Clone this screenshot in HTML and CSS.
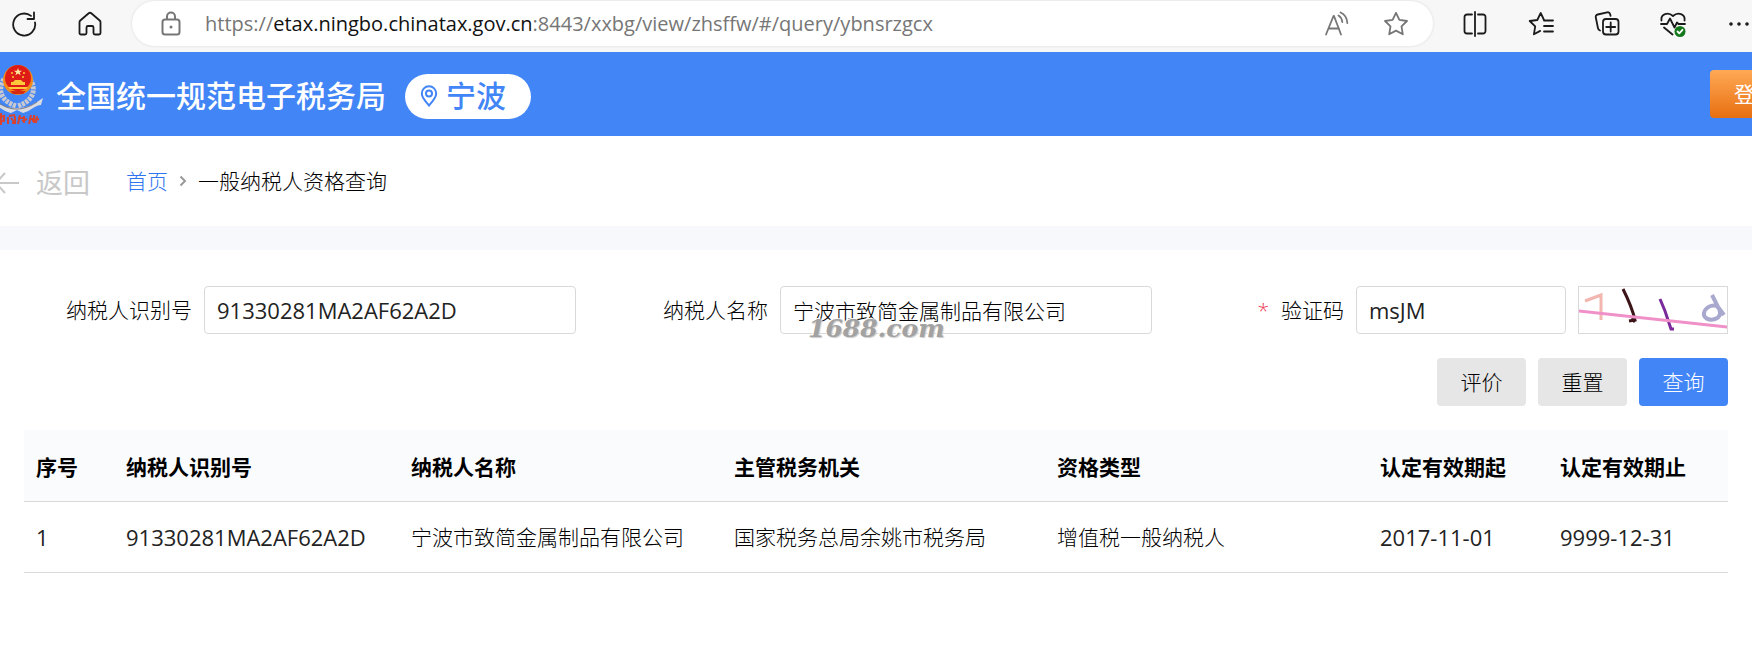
FILE: index.html
```html
<!DOCTYPE html>
<html lang="zh-CN">
<head>
    <meta charset="UTF-8">
    <meta name="viewport" content="width=device-width, initial-scale=1.0">
    <title>一般纳税人资格查询</title>
    <link rel="stylesheet" href="styles.css">
</head>
<body>
    <div class="toolbar">
        <button type="button" class="tool reload" aria-label="刷新">
            <svg width="26" height="26" viewBox="0 0 26 26"><path d="M24 11.500A11 11 0 1 1 20 4.900M23 1.500V8h-6.500"/></svg>
        </button>
        <button type="button" class="tool home" aria-label="主页">
            <svg width="26" height="26" viewBox="0 0 26 26"><path d="M2.500 11.200c0-.7.3-1.200.8-1.700L11.700 2.300a2 2 0 0 1 2.600 0L22.700 9.500c.5.5.8 1 .8 1.700V22a1.500 1.500 0 0 1-1.500 1.500h-4a1.500 1.500 0 0 1-1.500-1.500v-5.500a1.500 1.500 0 0 0-1.500-1.500h-4a1.500 1.500 0 0 0-1.500 1.500V22A1.500 1.500 0 0 1 8 23.500H4A1.500 1.500 0 0 1 2.500 22z"/></svg>
        </button>
        <div class="address">
            <svg class="lock" width="22" height="26" viewBox="0 0 22 26"><rect x="2.500" y="8.500" width="17" height="15" rx="2.500"/><path d="M7 8.500V5.500a4 4 0 0 1 8 0v3"/><circle class="dot" cx="11" cy="16" r="1.500"/></svg>
            <div class="url">https://<span>etax.ningbo.chinatax.gov.cn</span>:8443/xxbg/view/zhsffw/#/query/ybnsrzgcx</div>
            <button type="button" class="tool soft" aria-label="大声朗读">
                <svg width="26" height="26" viewBox="0 0 26 26"><path d="M2 23.500 9.500 5h.5L17 23.500M4.500 17.500h10.500M14.500 4.500c2 1.200 3.500 3.500 3.800 6.500M16.500 1.500c4 1.700 6.500 5.500 6.800 10.500"/></svg>
            </button>
            <button type="button" class="tool soft" aria-label="收藏">
                <svg width="26" height="26" viewBox="0 0 26 26"><path d="m13 1.800 3.400 7 7.600 1.200-5.500 5.400 1.300 7.900-6.800-3.700-6.800 3.700 1.300-7.900L2 10l7.600-1.200z"/></svg>
            </button>
        </div>
        <div class="tools">
            <button type="button" class="tool" aria-label="分屏">
                <svg width="26" height="26" viewBox="0 0 26 26"><path d="M10 3.500H5A2.500 2.500 0 0 0 2.500 6v14A2.500 2.500 0 0 0 5 22.500h5M13 1v24M16 3.500h5A2.500 2.500 0 0 1 23.500 6v14a2.500 2.500 0 0 1-2.500 2.500h-5"/></svg>
            </button>
            <button type="button" class="tool" aria-label="收藏夹">
                <svg width="26" height="26" viewBox="0 0 26 26"><path d="M17.500 9.500 16 9l-3.300-7L9.300 9 1.700 10l5.500 5.400-1.300 7.900 6.300-3.400M16 9.500h9M16 15h9M16 20.500h9"/></svg>
            </button>
            <button type="button" class="tool" aria-label="集锦">
                <svg width="26" height="26" viewBox="0 0 26 26"><rect x="9" y="8" width="15.500" height="15.500" rx="3"/><path d="M16.700 11.500v9M12.200 16h9M6 19.500c-1.200-.4-1.800-1.200-2-2.200L1.800 6.500A2.500 2.500 0 0 1 3.700 3.500l9.500-2.200c1.500-.3 2.600.6 3 2l.3 1.500"/></svg>
            </button>
            <button type="button" class="tool" aria-label="浏览器概要">
                <svg width="26" height="26" viewBox="0 0 26 26"><path d="M1.500 9.500C.5 3 8 .5 13 5c5-4.500 12.500-2 11.500 4.500M1 13h6l3-5.500 4.500 9 2.500-5 1.500 1.500H25M4 16.500l8.500 7"/><circle class="badge" cx="20" cy="20.500" r="5.500"/><path class="tick" d="m17.500 20.500 1.800 1.800 3.200-3.500"/></svg>
            </button>
            <button type="button" class="tool" aria-label="更多">
                <svg width="26" height="26" viewBox="0 0 26 26"><circle class="dot" cx="5" cy="13" r="1.800"/><circle class="dot" cx="13" cy="13" r="1.800"/><circle class="dot" cx="21" cy="13" r="1.800"/></svg>
            </button>
        </div>
    </div>

    <header class="header">
        <!-- 税徽 -->
        <svg class="logo" width="44" height="64" viewBox="0 0 44 64">
            <g fill="none" stroke="#c9c9cf" stroke-width="5" stroke-dasharray="3 1"><path d="M4 16c-7 11-3 22 12 27M30 16c7 11 3 22-12 27"/></g>
            <path d="M-6 36c4 6 12 9 23 9s19-5 26-10l-2 7c-6 0-10 6-18 8l-6-3-6 3c-8-2-11-7-18-8z" fill="#d9dbe0"/>
            <path d="M-2 39c6 5 12 7 19 7s14-3 20-7" fill="none" stroke="#777b86" stroke-width="1"/>
            <circle cx="18" cy="17" r="15" fill="#f08a1c"/>
            <circle cx="18" cy="15" r="13" fill="#df1b18"/>
            <path d="m18 5 1 2.700h3l-2.300 1.800.9 2.700-2.600-1.700-2.600 1.700.9-2.700L14 7.700h3z" fill="#ffe9a0"/>
            <g fill="#ffc83a"><circle cx="12" cy="10" r="1"/><circle cx="24" cy="10" r="1"/><circle cx="13" cy="14" r="1"/><circle cx="23" cy="14" r="1"/><path d="M13 19l2-2h6l2 2h2v3H11v-3zM8 24h20l-2 2H10z"/></g>
            <path d="M10 28h16l-3 3H13z" fill="#d72a13"/>
            <g fill="none" stroke="#d8432f" stroke-width="2"><path d="M-2 54l6-1v5l-6 1M1 50v12M9 53l6-1M8 54v7M11 55l3 4M15 53v8M12 60h3M20 52l-2 9M18 55h5M24 53v7M22 58l5-2M31 52l-2 9M29 56h4M34 52v8M32 58l7-2M37 53l-1 7"/></g>
        </svg>
        <h1>全国统一规范电子税务局</h1>
        <div class="city">
            <svg width="18" height="22" viewBox="0 0 18 22"><path d="M9 20.500C5 16 1.800 12.500 1.800 8.500a7.200 7.200 0 0 1 14.400 0C16.200 12.500 13 16 9 20.500z"/><circle cx="9" cy="8.500" r="3"/></svg>
            <span>宁波</span>
        </div>
        <button type="button" class="login">登录</button>
    </header>

    <nav class="crumbs">
        <a class="back" href="#">
            <svg width="30" height="24" viewBox="0 0 30 24"><path d="M29 12H6M15 2 6 12l9 10"/></svg>
            返回
        </a>
        <a class="crumb-home" href="#">首页</a>
        <svg class="sep" width="8" height="12" viewBox="0 0 8 12"><path d="m1.500 1.500 4.500 4.500-4.500 4.500"/></svg>
        <span>一般纳税人资格查询</span>
    </nav>

    <main class="content">
        <form>
            <div class="fields">
                <div class="field">
                    <label for="taxpayer-id">纳税人识别号</label>
                    <input type="text" id="taxpayer-id" class="latin" value="91330281MA2AF62A2D">
                </div>
                <div class="field">
                    <label for="taxpayer-name">纳税人名称</label>
                    <input type="text" id="taxpayer-name" value="宁波市致简金属制品有限公司">
                    <span class="watermark">1688.com</span>
                </div>
                <div class="field">
                    <label for="captcha"><span class="required">*</span>验证码</label>
                    <input type="text" id="captcha" class="latin" value="msJM">
                    <svg class="captcha" width="150" height="48" viewBox="1 1 148 46">
                        <path d="M7 15l16-6v25" stroke="#f2b5b0" stroke-width="3"/>
                        <path d="M45 3c5 10 9 18 12 31l-6 1M54 32l3 4" stroke="#3c1518" stroke-width="3"/>
                        <path d="M82 13l5 12 6 18h3" stroke="#7b2a9c" stroke-width="3"/>
                        <path d="M134 9l6 12 6 8M139 20c-6-2-12 2-13 7s5 8 11 6 7-8 2-13" stroke="#a9a9cf" stroke-width="4"/>
                        <path d="M0 25l150 16" stroke="#f090c8" stroke-width="3"/>
                    </svg>
                </div>
            </div>
            <div class="btn-group">
                <button type="button">评价</button>
                <button type="reset">重置</button>
                <button type="submit" class="primary">查询</button>
            </div>
        </form>

        <table>
            <thead>
                <tr>
                    <th class="col-index">序号</th>
                    <th class="col-id">纳税人识别号</th>
                    <th>纳税人名称</th>
                    <th>主管税务机关</th>
                    <th>资格类型</th>
                    <th class="col-date">认定有效期起</th>
                    <th class="col-date">认定有效期止</th>
                </tr>
            </thead>
            <tbody>
                <tr>
                    <td class="latin">1</td>
                    <td class="latin">91330281MA2AF62A2D</td>
                    <td>宁波市致简金属制品有限公司</td>
                    <td>国家税务总局余姚市税务局</td>
                    <td>增值税一般纳税人</td>
                    <td class="latin">2017-11-01</td>
                    <td class="latin">9999-12-31</td>
                </tr>
            </tbody>
        </table>
    </main>
</body>
</html>
```
FILE: styles.css
```css
* {
    box-sizing: border-box;
}

body {
    margin: 0;
    font-family: "Open Sans", "Noto Sans CJK SC", sans-serif;
    font-size: 21px;
    font-weight: 300;
    line-height: 30px;
    color: #000;
    background: #fff;
    overflow-x: hidden;
}

button,
input {
    font: inherit;
    color: inherit;
}

button {
    border: none;
    cursor: pointer;
}

a {
    text-decoration: none;
}

svg {
    display: block;
    flex: none;
    fill: none;
}

/* browser toolbar */
.toolbar {
    display: flex;
    align-items: center;
    height: 52px;
    padding: 0 0 5px 11px;
    background: #f7f7f7;
    overflow: hidden;
}

.tool {
    flex: none;
    padding: 0;
    background: none;
}

.tool svg {
    stroke: #1b1b1b;
    stroke-width: 1.8;
    stroke-linecap: round;
    stroke-linejoin: round;
}

.tool.soft svg {
    stroke: #767676;
}

.reload {
    margin-right: 40px;
}

.home {
    margin-right: 29px;
}

.address {
    display: flex;
    flex: 1;
    align-items: center;
    gap: 33px;
    height: 45px;
    padding: 0 24px 0 28px;
    border-radius: 23px;
    background: #fff;
    box-shadow: 0 0 3px rgba(0, 0, 0, 0.12);
}

.lock {
    margin-right: -10px;
    stroke: #767676;
    stroke-width: 2;
}

.toolbar .dot {
    fill: #1b1b1b;
    stroke: none;
}

.lock .dot {
    fill: #767676;
}

.url {
    flex: 1;
    font-size: 20px;
    font-weight: 400;
    color: #767676;
    white-space: nowrap;
}

.url span {
    color: #111;
}

.tools {
    display: flex;
    gap: 40px;
    margin-left: 29px;
}

.tool .badge {
    fill: #13781b;
    stroke: none;
}

.tool .tick {
    stroke: #fff;
}

/* site header */
.header {
    display: flex;
    align-items: center;
    height: 84px;
    background: #4285f7;
    color: #fff;
}

.header h1 {
    margin: 0 19px 0 12px;
    padding-top: 4px;
    font-size: 30px;
    font-weight: 500;
    white-space: nowrap;
}

.logo {
    margin-top: 2px;
}

.city {
    display: flex;
    align-items: center;
    gap: 8px;
    height: 45px;
    margin-top: 4px;
    padding: 0 25px 0 15px;
    border-radius: 23px;
    background: #fff;
    color: #4285f7;
    font-size: 30px;
    font-weight: 500;
    white-space: nowrap;
}

.city svg {
    stroke: #4285f7;
    stroke-width: 2;
}

.login {
    flex: none;
    height: 48px;
    margin-left: auto;
    margin-right: -48px;
    padding: 0 24px;
    border-radius: 4px;
    background: linear-gradient(#ffa956, #e86f10);
    color: #fff;
    font-weight: 400;
}

/* breadcrumb */
.crumbs {
    display: flex;
    align-items: center;
    height: 90px;
    overflow: hidden;
}

.back {
    display: flex;
    align-items: center;
    gap: 16px;
    margin-left: -10px;
    margin-right: 36px;
    padding-top: 3px;
    font-size: 27px;
    font-weight: 400;
    color: #c8c8c8;
}

.back svg {
    stroke: #c8c8c8;
    stroke-width: 2;
}

.crumb-home {
    color: #2d74f0;
}

.sep {
    margin: 0 11px;
    stroke: #999;
    stroke-width: 2;
}

/* query form */
.content {
    padding: 36px 24px;
    border-top: 24px solid #f7f8fb;
}

.fields {
    display: grid;
    grid-template-columns: repeat(3, minmax(0, 1fr));
    gap: 24px;
}

.field {
    position: relative;
    display: flex;
    align-items: center;
    gap: 12px;
}

.field label {
    width: 168px;
    flex: none;
    text-align: right;
}

.field input {
    flex: 1;
    min-width: 0;
    height: 48px;
    padding: 0 12px;
    border: 1px solid #d9d9d9;
    border-radius: 4px;
    background: #fff;
    outline: none;
}

.field .latin,
td.latin {
    font-size: 22px;
    font-weight: 400;
    color: #222;
}

.required {
    margin-right: 12px;
    color: #f0405a;
}

.captcha {
    border: 1px solid #d9d9d9;
}

.watermark {
    position: absolute;
    left: 208px;
    top: 28px;
    font-family: "DejaVu Serif", serif;
    font-size: 25px;
    font-style: italic;
    font-weight: 700;
    color: #a2a2a2;
    text-shadow: 1px 1px 1px #ccc, -1px -1px 0 #fff;
    pointer-events: none;
}

.btn-group {
    display: flex;
    justify-content: flex-end;
    gap: 12px;
    margin: 24px 0;
}

.btn-group button {
    width: 89px;
    height: 48px;
    padding: 0;
    border-radius: 4px;
    background: #e6e6e6;
}

.btn-group .primary {
    background: #4285f7;
    color: #fff;
}

/* result table */
table {
    width: 100%;
    table-layout: fixed;
    border-collapse: collapse;
}

th,
td {
    height: 71px;
    padding: 0 12px;
    border-bottom: 1px solid #d9d9d9;
    text-align: left;
    white-space: nowrap;
}

th {
    padding-top: 4px;
    background: #fafbfd;
    font-weight: 700;
}

.col-index {
    width: 90px;
}

.col-id {
    width: 285px;
}

.col-date {
    width: 180px;
}
```
